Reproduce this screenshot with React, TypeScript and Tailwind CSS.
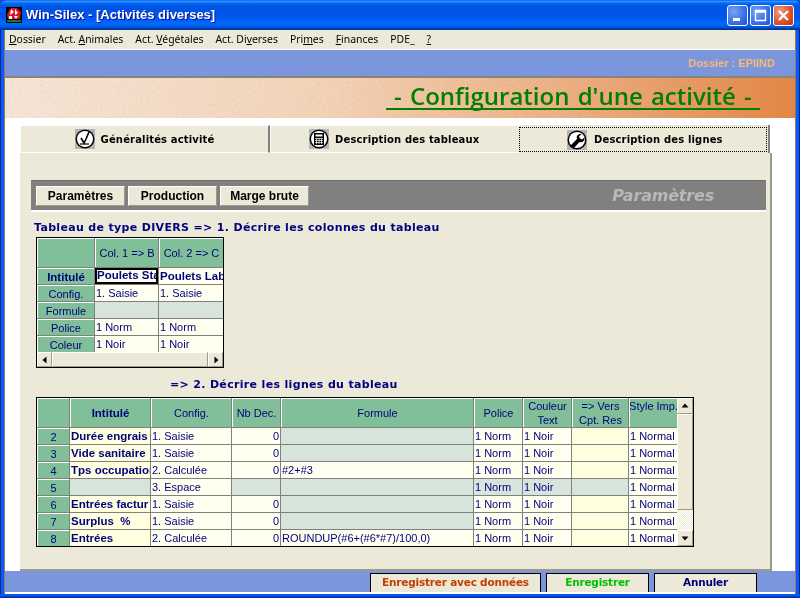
import React from "react";

const menu: [string, string, string][] = [
  ["", "D", "ossier"],
  ["Act. ", "A", "nimales"],
  ["Act. ", "V", "égétales"],
  ["Act. Di", "v", "erses"],
  ["Pri", "m", "es"],
  ["", "F", "inances"],
  ["PDE_", "", ""],
  ["", "?", ""],
];

const MenuBar = () => (
  <div className="flex h-[20px] shrink-0 items-center gap-[12px] border-b border-white bg-[#ece9d8] pl-[4px] text-[10.4px] text-black [font-family:'Noto_Sans',sans-serif]">
    {menu.map(([a, u, b], i) => (
      <span key={i} className="whitespace-pre">
        {a}
        <u>{u}</u>
        {b}
      </span>
    ))}
  </div>
);

const WinButton = ({ kind }: { kind: "min" | "max" | "close" }) => (
  <div
    className={
      kind === "close"
        ? "flex h-[21px] w-[21px] items-center justify-center rounded-[3px] border border-white bg-[radial-gradient(circle_at_30%_30%,#f0a080,#d8502a_60%,#c03010)]"
        : "flex h-[21px] w-[21px] items-center justify-center rounded-[3px] border border-white bg-[radial-gradient(circle_at_30%_30%,#7aa4f4,#3a6ee8_60%,#2050d0)]"
    }
  >
    <svg width="13" height="13" viewBox="0 0 13 13">
      {kind === "min" && <rect x="2" y="9" width="7" height="3" fill="#fff" />}
      {kind === "max" && (
        <path d="M1.500 1.500h10v10h-10zM1.500 3h10" fill="none" stroke="#fff" strokeWidth="1.4" />
      )}
      {kind === "close" && (
        <path d="M2 2l9 9M11 2l-9 9" fill="none" stroke="#fff" strokeWidth="2.2" />
      )}
    </svg>
  </div>
);

const AppLogo = () => (
  <svg width="16" height="16" viewBox="0 0 16 16" className="shrink-0">
    <rect width="16" height="16" fill="#000" />
    <path d="M1 7l4-6 6 0 4 4-1 7H2z" fill="#d8142c" />
    <path d="M5 2l3 3-4 3zM9 2l3 4-3 2zM3 9h3v3H3zM8 9l4 0-2 3z" fill="#fff" />
    <rect x="1" y="13" width="14" height="2" fill="#1c7a2a" />
  </svg>
);

const TitleBar = () => (
  <div className="flex h-[30px] shrink-0 items-center rounded-t-[7px] bg-[linear-gradient(180deg,#0058ee_0%,#3593ff_4%,#288eff_6%,#127dff_8%,#036ffc_10%,#0262ee_14%,#0057e5_20%,#0054e3_24%,#0055eb_56%,#005bf5_66%,#026afe_76%,#0062ef_86%,#0052d6_92%,#0040ab_94%,#003092_100%)] px-[6px]">
    <AppLogo />
    <span className="ml-[4px] text-[13px] font-bold text-white [font-family:'Liberation_Sans',sans-serif] [text-shadow:1px_1px_#0f1089]">
      Win-Silex - [Activités diverses]
    </span>
    <div className="ml-auto flex gap-[2px]">
      <WinButton kind="min" />
      <WinButton kind="max" />
      <WinButton kind="close" />
    </div>
  </div>
);

const IconFrame = ({ children }: { children: React.ReactNode }) => (
  <svg width="20" height="20" viewBox="0 0 20 20" className="shrink-0">
    <rect width="20" height="20" fill="#b4b4b4" />
    <circle cx="10" cy="10" r="9.5" fill="#000" />
    <circle cx="10" cy="10" r="8" fill="#fff" />
    {children}
  </svg>
);

const CheckIcon = () => (
  <IconFrame>
    <path d="M14 3l-3 7M6 9l3 5 2-4" fill="none" stroke="#000" strokeWidth="1.6" />
    <path d="M5 15h9" stroke="#000" strokeWidth="1.2" />
  </IconFrame>
);

const CalcIcon = () => (
  <IconFrame>
    <rect x="5" y="4" width="10" height="12" fill="#000" />
    <rect x="6.500" y="5.500" width="7" height="2" fill="#fff" />
    <path d="M6 9.500h8M6 11.500h8M6 13.500h8M7.500 9v6M10 9v6M12.500 9v6" stroke="#fff" strokeWidth="0.7" />
  </IconFrame>
);

const WrenchIcon = () => (
  <IconFrame>
    <path d="M3 16l7-7c-1-3 1-5.500 4.500-5l-2.500 2.500 1 2 2 1 2.500-2c.5 3.500-2.500 5.500-5 4.500l-6 6.500z" fill="#000" />
  </IconFrame>
);

const tabText = "text-[10px] font-bold text-black [font-family:'DejaVu_Sans',sans-serif] tracking-[0.15px] whitespace-nowrap";

const Tabs = () => (
  <div className="flex h-[28px] shrink-0">
    <div className="flex h-full w-[250px] items-center justify-center gap-[6px] border-t border-l border-r-2 border-b border-t-white border-l-white border-r-[#808080] border-b-white bg-[#ece9d8]">
      <CheckIcon />
      <span className={tabText}>Généralités activité</span>
    </div>
    <div className="flex h-full w-[249px] items-center gap-[6px] border-t border-l border-b border-t-white border-l-white border-b-white bg-[#ece9d8] pl-[38px]">
      <CalcIcon />
      <span className={tabText}>Description des tableaux</span>
    </div>
    <div className="h-full w-[251px] border-r-2 border-[#808080] bg-[#ece9d8] pt-[2px]">
      <div className="flex h-[25px] w-[248px] items-center gap-[7px] border border-dotted border-black pl-[47px]">
        <WrenchIcon />
        <span className={tabText}>Description des lignes</span>
      </div>
    </div>
  </div>
);

const BandButton = ({ label }: { label: string }) => (
  <div className="flex h-[20px] w-[89px] items-center justify-center border border-t-white border-l-white border-r-[#9d9a88] border-b-[#9d9a88] bg-[#ece9d8] text-[12px] font-bold text-black [font-family:'Liberation_Sans',sans-serif]">
    {label}
  </div>
);

const ParamBand = () => (
  <div className="box-content flex h-[29px] items-center border-t border-b-2 border-t-[#716f64] border-b-white bg-[#808080] pl-[5px]">
    <div className="flex gap-[3px]">
      <BandButton label="Paramètres" />
      <BandButton label="Production" />
      <BandButton label="Marge brute" />
    </div>
    <span className="ml-auto mr-[52px] text-[16px] font-bold italic text-[#b8b8b8] [font-family:'DejaVu_Sans',sans-serif] tracking-[-0.2px]">
      Paramètres
    </span>
  </div>
);

type Tone = "head" | "label" | "cream" | "light" | "off";

const toneClass: Record<Tone, string> = {
  head: "bg-[#80bf97] border-t border-l border-t-white border-l-white justify-center text-center",
  label: "bg-[#80bf97] border-t border-l border-t-white border-l-white justify-center",
  cream: "bg-[#ffffef] pl-[1px]",
  light: "bg-[#ffffe0] pl-[1px]",
  off: "bg-[#d6e4dc] pl-[1px]",
};

const Cell = ({
  tone,
  bold,
  right,
  children,
}: {
  tone: Tone;
  bold?: boolean;
  right?: boolean;
  children?: React.ReactNode;
}) => (
  <div
    className={`flex min-w-0 items-center overflow-hidden whitespace-nowrap leading-[14px] ${toneClass[tone]} ${
      bold ? "text-[11.500px] font-bold" : "text-[11px]"
    } ${right ? "justify-end pr-[1px]" : ""}`}
  >
    {children}
  </div>
);

const Arrow = ({ dir }: { dir: "left" | "right" | "up" | "down" }) => (
  <div className="flex h-full w-full items-center justify-center border border-t-white border-l-white border-r-[#9d9a88] border-b-[#9d9a88] bg-[#ece9d8]">
    <svg width="8" height="8" viewBox="0 0 8 8">
      {dir === "left" && <path d="M5.500 0.500v7l-4-3.500z" fill="#000" />}
      {dir === "right" && <path d="M2.500 0.500v7l4-3.500z" fill="#000" />}
      {dir === "up" && <path d="M0.500 5.500h7l-3.500-4z" fill="#000" />}
      {dir === "down" && <path d="M0.500 2.500h7l-3.500 4z" fill="#000" />}
    </svg>
  </div>
);

const ColumnsTable = () => (
  <div className="ml-[5px] w-[188px] border border-black text-[#000080] [font-family:'Liberation_Sans',sans-serif]">
    <div className="grid grid-cols-[57px_63px_64px] grid-rows-[29px_16px_16px_16px_16px_16px] gap-px bg-[#808080]">
      <Cell tone="head" />
      <Cell tone="head">Col. 1 =&gt; B</Cell>
      <Cell tone="head">Col. 2 =&gt; C</Cell>
      <Cell tone="label" bold>Intitulé</Cell>
      <div className="flex items-center overflow-hidden whitespace-nowrap border-2 border-black bg-[#ffffef] text-[11.500px] font-bold">
        Poulets Sta
      </div>
      <Cell tone="cream" bold>Poulets Lab</Cell>
      <Cell tone="label">Config.</Cell>
      <Cell tone="cream">1. Saisie</Cell>
      <Cell tone="cream">1. Saisie</Cell>
      <Cell tone="label">Formule</Cell>
      <Cell tone="off" />
      <Cell tone="off" />
      <Cell tone="label">Police</Cell>
      <Cell tone="cream">1 Norm</Cell>
      <Cell tone="cream">1 Norm</Cell>
      <Cell tone="label">Coleur</Cell>
      <Cell tone="cream">1 Noir</Cell>
      <Cell tone="cream">1 Noir</Cell>
    </div>
    <div className="flex h-[15px] bg-[#ece9d8]">
      <div className="w-[15px]"><Arrow dir="left" /></div>
      <div className="flex-1 border border-t-white border-l-white border-r-[#9d9a88] border-b-[#9d9a88]" />
      <div className="w-[15px]"><Arrow dir="right" /></div>
    </div>
  </div>
);

type Line = {
  n: number;
  title: string;
  config: string;
  dec?: string;
  formula?: string;
};

const lines: Line[] = [
  { n: 2, title: "Durée engrais", config: "1. Saisie", dec: "0" },
  { n: 3, title: "Vide sanitaire", config: "1. Saisie", dec: "0" },
  { n: 4, title: "Tps occupation", config: "2. Calculée", dec: "0", formula: "#2+#3" },
  { n: 5, title: "", config: "3. Espace" },
  { n: 6, title: "Entrées factur", config: "1. Saisie", dec: "0" },
  { n: 7, title: "Surplus  %", config: "1. Saisie", dec: "0" },
  { n: 8, title: "Entrées", config: "2. Calculée", dec: "0", formula: "ROUNDUP(#6+(#6*#7)/100,0)" },
];

const LinesTable = () => (
  <div className="ml-[5px] flex w-[658px] border border-black text-[#000080] [font-family:'Liberation_Sans',sans-serif]">
    <div className="grid grid-cols-[32px_80px_80px_48px_192px_48px_48px_56px_48px] grid-rows-[29px_repeat(7,16px)] gap-px bg-[#808080]">
      <Cell tone="head" />
      <Cell tone="head" bold>Intitulé</Cell>
      <Cell tone="head">Config.</Cell>
      <Cell tone="head">Nb Dec.</Cell>
      <Cell tone="head">Formule</Cell>
      <Cell tone="head">Police</Cell>
      <Cell tone="head"><span>Couleur<br />Text</span></Cell>
      <Cell tone="head"><span>=&gt; Vers<br />Cpt. Res</span></Cell>
      <div className="flex items-start justify-center overflow-hidden whitespace-nowrap border-t border-l border-t-white border-l-white bg-[#80bf97] text-[11px] leading-[14px]">
        Style Imp.
      </div>
      {lines.map((l) => (
        <React.Fragment key={l.n}>
          <Cell tone="label">{l.n}</Cell>
          <Cell tone={l.title ? "light" : "off"} bold>
            <span className="whitespace-pre">{l.title}</span>
          </Cell>
          <Cell tone="cream">{l.config}</Cell>
          <Cell tone={l.dec ? "cream" : "off"} right>{l.dec}</Cell>
          <Cell tone={l.formula ? "cream" : "off"}>{l.formula}</Cell>
          <Cell tone={l.title ? "cream" : "off"}>1 Norm</Cell>
          <Cell tone={l.title ? "cream" : "off"}>1 Noir</Cell>
          <Cell tone={l.title ? "light" : "off"} />
          <Cell tone="cream">1 Normal</Cell>
        </React.Fragment>
      ))}
    </div>
    <div className="flex w-[16px] flex-col bg-[#ece9d8]">
      <div className="h-[16px]"><Arrow dir="up" /></div>
      <div className="h-[96px] border border-t-white border-l-white border-r-[#9d9a88] border-b-[#9d9a88]" />
      <div className="flex-1 bg-[repeating-conic-gradient(#ffffff_0_25%,#ece9d8_0_50%)] bg-[length:2px_2px]" />
      <div className="h-[16px]"><Arrow dir="down" /></div>
    </div>
  </div>
);

const headingClass = "text-[11px] font-bold text-[#000080] [font-family:'DejaVu_Sans',sans-serif] tracking-[0.33px] whitespace-nowrap";

const Panel = () => (
  <div className="flex-1 border-r-2 border-b-2 border-[#9d9a88] bg-[#ece9d8] pl-[11px] pr-[4px] pt-[27px]">
    <ParamBand />
    <div className={`${headingClass} ml-[3px] mt-[8px] h-[17px]`}>
      Tableau de type DIVERS =&gt; 1. Décrire les colonnes du tableau
    </div>
    <ColumnsTable />
    <div className={`${headingClass} ml-[139px] mt-[9px] h-[20px]`}>
      =&gt; 2. Décrire les lignes du tableau
    </div>
    <LinesTable />
  </div>
);

const footerButton = "flex h-[19px] items-center justify-center border-t border-x border-black bg-[#ece9d8]";

const Footer = () => (
  <div className="shrink-0 border-b-2 border-white">
    <div className="flex h-[21px] justify-end gap-[5px] bg-[#7b96dc] pr-[38px] pt-[2px] text-[10.500px] font-bold tracking-[-0.2px] [font-family:'DejaVu_Sans',sans-serif]">
      <div className={`${footerButton} w-[171px] text-[#c04000]`}>Enregistrer avec données</div>
      <div className={`${footerButton} w-[103px] text-[#00c000]`}>Enregistrer</div>
      <div className={`${footerButton} w-[103px] text-[#000080]`}>Annuler</div>
    </div>
  </div>
);

export default function App() {
  return (
    <div className="flex h-[598px] w-[800px] flex-col overflow-hidden bg-[#0a50e0]">
      <TitleBar />
      <div className="flex min-h-0 flex-1 flex-col bg-[linear-gradient(90deg,#00209c_0,#00209c_1px,#0a5cf0_1px,#0a5cf0_4px,#7f7c70_4px,#7f7c70_796px,#0a5cf0_796px,#0a5cf0_799px,#00209c_799px)] px-[5px]">
        <MenuBar />
        <div className="flex h-[26px] shrink-0 items-center justify-end bg-[#7b96dc] pr-[20px] text-[11px] font-bold text-[#f8b878] [font-family:'Liberation_Sans',sans-serif]">
          Dossier : EPIIND
        </div>
        <div className="relative flex h-[42px] shrink-0 items-center justify-end border-t-2 border-[#8a8474] bg-[linear-gradient(90deg,#fbeadb_0%,#f8d8bc_40%,#f2b488_70%,#e88a48_100%)] pr-[35px]">
          <svg className="absolute inset-0 h-full w-full opacity-20 mix-blend-multiply">
            <filter id="grain">
              <feTurbulence type="fractalNoise" baseFrequency="0.45" numOctaves="3" />
              <feColorMatrix type="saturate" values="0" />
            </filter>
            <rect width="100%" height="100%" filter="url(#grain)" />
          </svg>
          <span className="relative mb-[3px] whitespace-pre border-b-2 border-[#008000] text-[24px] font-semibold leading-[25px] text-[#008000] [font-family:'Open_Sans',sans-serif] [word-spacing:2px]">
            {" - Configuration d'une activité - "}
          </span>
        </div>
        <div className="flex min-h-0 flex-1 flex-col bg-white pl-[15px] pr-[23px] pt-[7px]">
          <Tabs />
          <Panel />
        </div>
        <Footer />
      </div>
      <div className="h-[4px] shrink-0 bg-[linear-gradient(180deg,#0a5cf0,#0a50e0_50%,#00209c)]" />
    </div>
  );
}
